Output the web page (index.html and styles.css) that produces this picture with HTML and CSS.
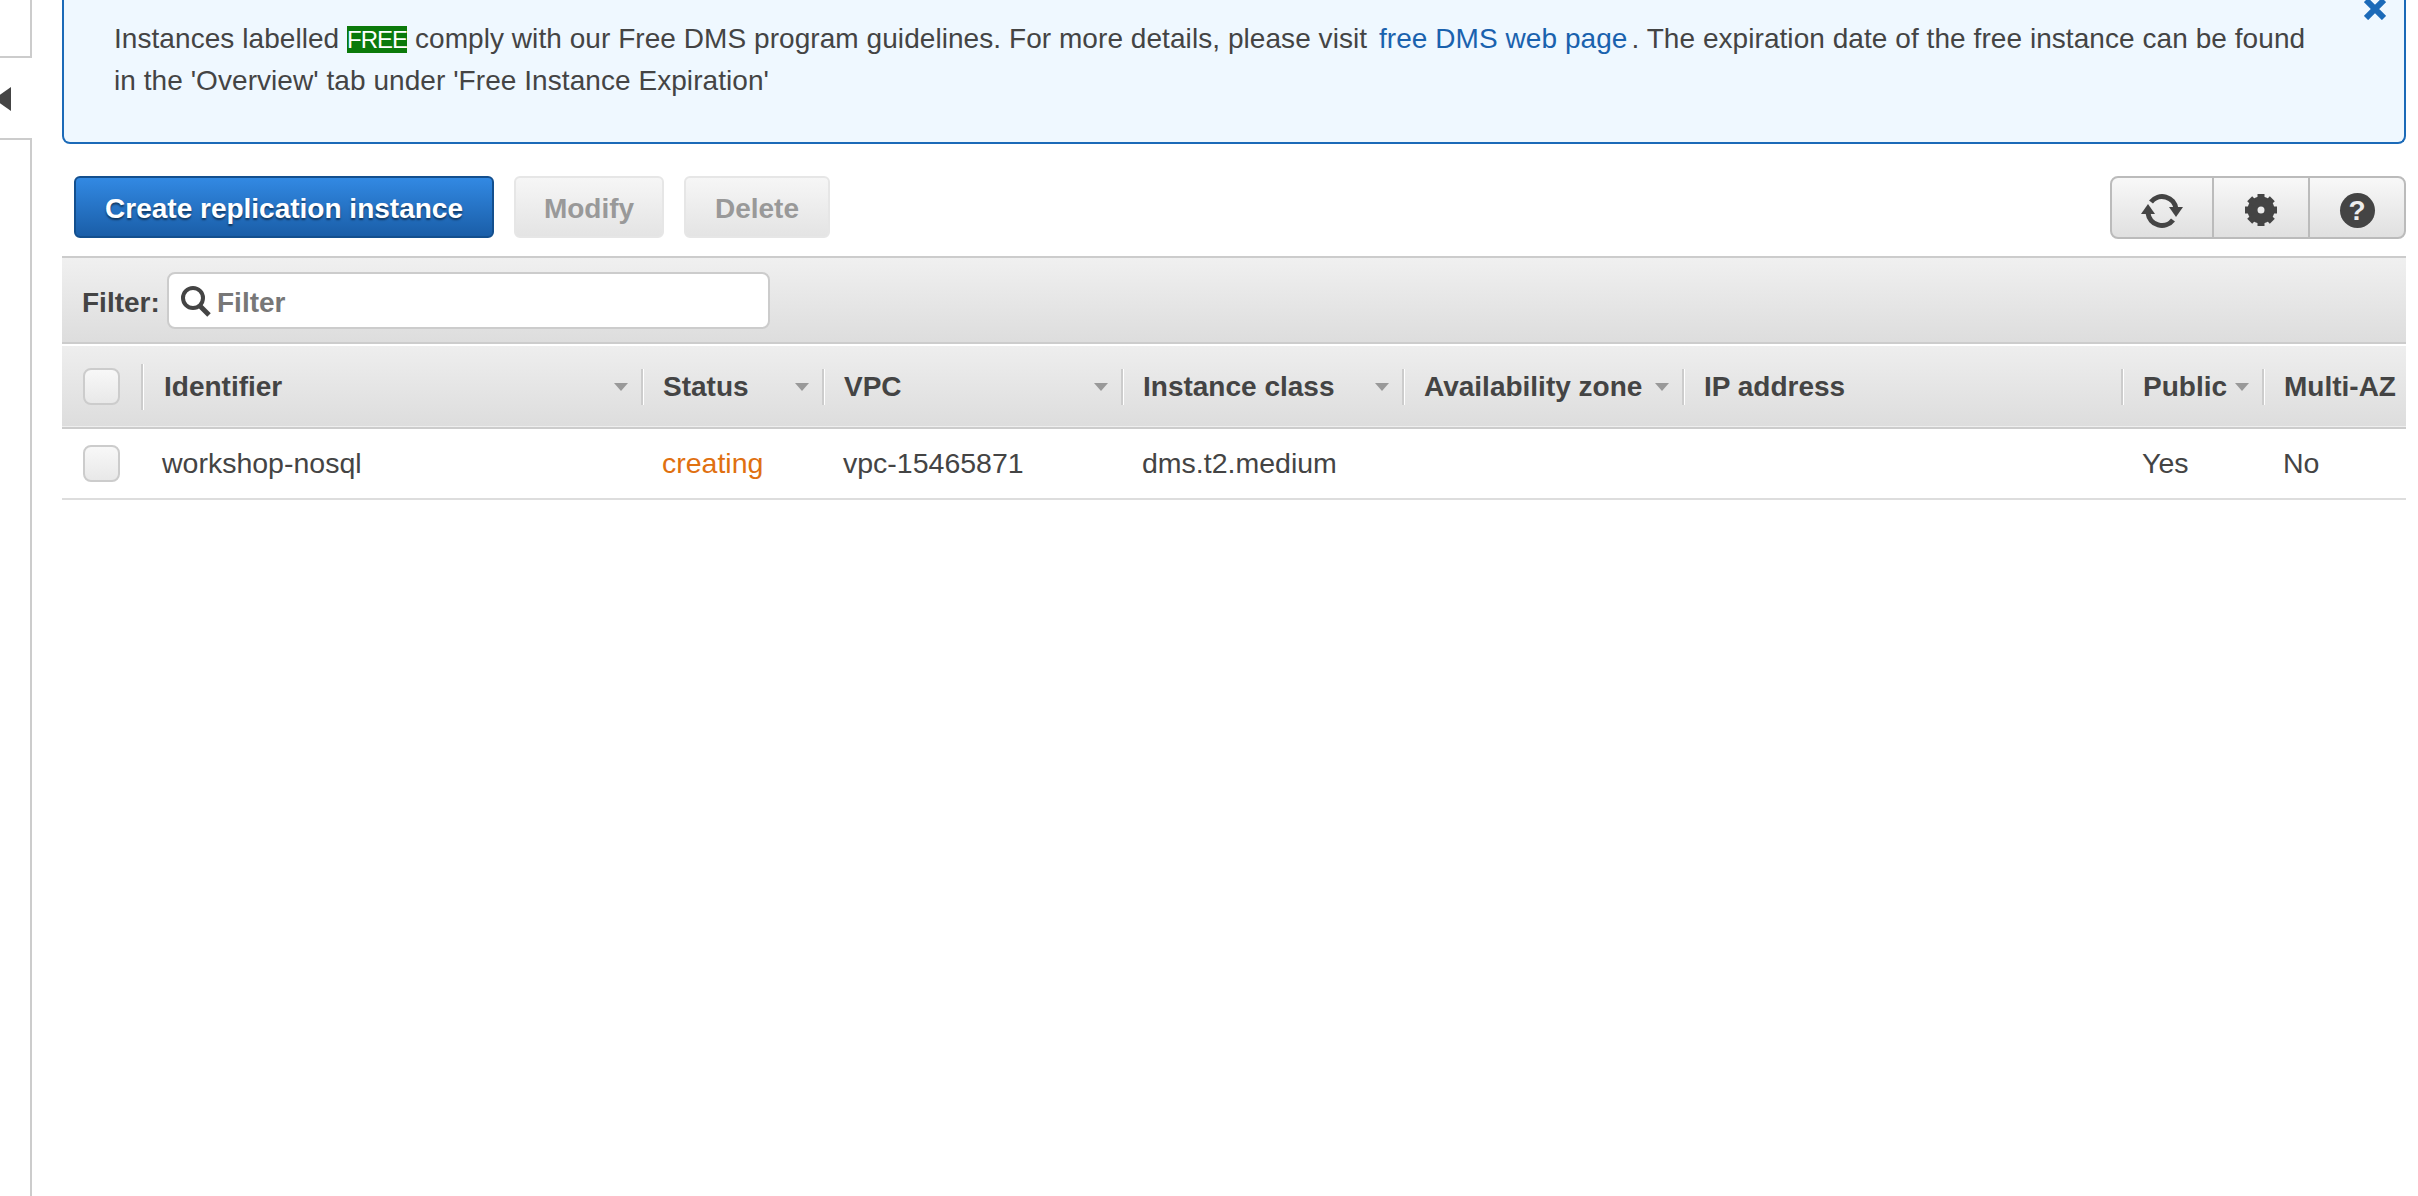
FILE: index.html
```html
<!DOCTYPE html>
<html>
<head>
	<meta charset="utf-8">
	<title>Replication instances</title>
	<link rel="stylesheet" href="styles.css">
</head>

<body>
	<div class="page">
		<div class="side">
			<div class="side-top"></div>
			<div class="side-toggle"><span class="toggle-arrow"></span></div>
			<div class="side-rest"></div>
		</div>

		<div class="main">
			<div class="notice">
				<p>Instances labelled <span class="free">FREE</span> comply with our Free DMS program guidelines. For more details, please visit <a class="link" href="#">free DMS web page</a>. The expiration date of the free instance can be found in the 'Overview' tab under 'Free Instance Expiration'</p>
				<svg class="notice-close" viewBox="0 0 22 22"><path d="M2 2 L20 20 M20 2 L2 20" /></svg>
			</div>

			<div class="toolbar">
				<button class="btn btn-primary">Create replication instance</button>
				<button class="btn btn-off btn-modify">Modify</button>
				<button class="btn btn-off btn-delete">Delete</button>
				<div class="tools">
					<div class="tool tool-refresh">
						<svg width="42" height="38" viewBox="0 0 42 38">
							<path class="ico-line" d="M10 10 A14 14 0 0 1 35 17" />
							<path class="ico-fill" d="M28 15 L42 15 L35 25 Z" />
							<path class="ico-line" d="M32 28 A14 14 0 0 1 7 21" />
							<path class="ico-fill" d="M0 22 L14 22 L7 12 Z" />
						</svg>
					</div>
					<div class="tool tool-gear">
						<svg width="32" height="32" viewBox="-16 -16 32 32">
							<circle class="gear-ring" r="8.500" />
							<g class="ico-fill">
								<rect x="-3.500" y="-16" width="7" height="7" />
								<rect x="-3.500" y="-16" width="7" height="7" transform="rotate(45)" />
								<rect x="-3.500" y="-16" width="7" height="7" transform="rotate(90)" />
								<rect x="-3.500" y="-16" width="7" height="7" transform="rotate(135)" />
								<rect x="-3.500" y="-16" width="7" height="7" transform="rotate(180)" />
								<rect x="-3.500" y="-16" width="7" height="7" transform="rotate(225)" />
								<rect x="-3.500" y="-16" width="7" height="7" transform="rotate(270)" />
								<rect x="-3.500" y="-16" width="7" height="7" transform="rotate(315)" />
							</g>
						</svg>
					</div>
					<div class="tool tool-help">
						<span class="help-mark">?</span>
					</div>
				</div>
			</div>

			<div class="filter-bar">
				<label class="filter-label">Filter:</label>
				<div class="filter-box">
					<svg class="search-ico" width="32" height="34" viewBox="0 0 32 34">
						<circle cx="13" cy="14" r="10" />
						<path d="M20 22 L29 31" />
					</svg>
					<span class="filter-hint">Filter</span>
				</div>
			</div>

			<table class="grid">
				<colgroup>
					<col class="c-check">
					<col class="c-id">
					<col class="c-status">
					<col class="c-vpc">
					<col class="c-class">
					<col class="c-zone">
					<col class="c-ip">
					<col class="c-public">
					<col class="c-multi">
				</colgroup>
				<thead>
					<tr>
						<th class="check-cell"><span class="check"></span></th>
						<th><div class="head head-first"><span>Identifier</span><i class="sort"></i></div></th>
						<th><div class="head"><span>Status</span><i class="sort"></i></div></th>
						<th><div class="head"><span>VPC</span><i class="sort"></i></div></th>
						<th><div class="head"><span>Instance class</span><i class="sort"></i></div></th>
						<th><div class="head"><span>Availability zone</span><i class="sort"></i></div></th>
						<th><div class="head"><span>IP address</span></div></th>
						<th><div class="head"><span>Public</span><i class="sort"></i></div></th>
						<th><div class="head"><span>Multi-AZ</span></div></th>
					</tr>
				</thead>
				<tbody>
					<tr>
						<td class="check-cell"><span class="check"></span></td>
						<td>workshop-nosql</td>
						<td class="creating">creating</td>
						<td>vpc-15465871</td>
						<td>dms.t2.medium</td>
						<td></td>
						<td></td>
						<td>Yes</td>
						<td>No</td>
					</tr>
				</tbody>
			</table>
		</div>
	</div>
</body>
</html>
```

FILE: styles.css
```css
* {
	padding: 0;
	margin: 0;
	box-sizing: border-box;
}
html, body {
	height: 100%;
	overflow: hidden;
	background-color: #fff;
}
body {
	font-family: "Liberation Sans", Arial, sans-serif;
	font-size: 28px;
	color: #444;
}

.page {
	display: flex;
	height: 1196px;
}

/* left panel */
.side {
	display: flex;
	flex-direction: column;
	width: 32px;
	flex: none;
}
.side-top {
	height: 58px;
	border-right: 2px solid #ccc;
	border-bottom: 2px solid #ccc;
}
.side-toggle {
	display: flex;
	align-items: center;
	height: 80px;
}
.toggle-arrow {
	width: 0;
	height: 0;
	margin: 1px 0 0 -6px;
	border-top: 12px solid transparent;
	border-bottom: 12px solid transparent;
	border-right: 17px solid #444;
}
.side-rest {
	flex: 1;
	border-top: 2px solid #ccc;
	border-right: 2px solid #ccc;
}

.main {
	width: 2344px;
	margin-left: 30px;
}

/* blue message */
.notice {
	position: relative;
	height: 144px;
	padding: 18px 75px 0 50px;
	background-color: #eff8ff;
	border: 2px solid #1b6ab8;
	border-top: 0;
	border-radius: 0 0 8px 8px;
	letter-spacing: .06px;
	line-height: 42px;
}
.free {
	display: inline-block;
	height: 27px;
	background-color: #0b7a0b;
	color: #fff;
	font-size: 24px;
	letter-spacing: -1px;
	line-height: 27px;
}
.link {
	margin: 0 4px;
	color: #1a62ae;
	text-decoration: none;
}
.notice-close {
	position: absolute;
	top: -2px;
	right: 18px;
	width: 22px;
	height: 22px;
	fill: none;
	stroke: #1b6ab8;
	stroke-width: 6;
}

/* buttons */
.toolbar {
	display: flex;
	align-items: flex-start;
	padding: 32px 0 17px 12px;
}
.btn {
	height: 62px;
	padding-top: 3px;
	border-radius: 6px;
	font-family: inherit;
	font-size: 28px;
	font-weight: bold;
}
.btn-primary {
	width: 420px;
	background: linear-gradient(#3289e3, #1a5ea8);
	border: 2px solid #134f8e;
	color: #fff;
	text-shadow: 0 2px 2px rgba(0,0,0,.5);
}
.btn-off {
	background: linear-gradient(#f6f6f6, #e4e4e4);
	border: 2px solid #e6e6e6;
	color: #999;
}
.btn-modify {
	width: 150px;
	margin-left: 20px;
}
.btn-delete {
	width: 146px;
	margin-left: 20px;
}
.tools {
	display: flex;
	height: 63px;
	margin-left: auto;
	background: linear-gradient(#f8f8f8, #e0e0e0);
	border: 2px solid #bbb;
	border-radius: 8px;
}
.tool {
	display: flex;
	align-items: center;
	justify-content: center;
	padding-top: 6px;
}
.tool + .tool {
	border-left: 2px solid #bbb;
}
.tool-refresh {
	width: 100px;
}
.tool-gear {
	width: 96px;
	padding-top: 4px;
}
.tool-help {
	width: 96px;
}
.ico-line {
	fill: none;
	stroke: #444;
	stroke-width: 5;
}
.ico-fill {
	fill: #444;
}
.gear-ring {
	fill: none;
	stroke: #444;
	stroke-width: 10;
}
.help-mark {
	width: 35px;
	height: 35px;
	border-radius: 50%;
	background-color: #444;
	color: #eee;
	font-size: 28px;
	font-weight: bold;
	line-height: 35px;
	text-align: center;
}

/* filter */
.filter-bar {
	display: flex;
	align-items: center;
	height: 88px;
	padding: 1px 20px 0;
	background: linear-gradient(#f0f0f0, #ddd);
	border-top: 2px solid #ccc;
	border-bottom: 2px solid #ccc;
}
.filter-label {
	width: 85px;
	padding-top: 5px;
	font-weight: bold;
}
.filter-box {
	display: flex;
	align-items: center;
	width: 603px;
	height: 57px;
	padding-left: 11px;
	background-color: #fff;
	border: 2px solid #ccc;
	border-radius: 8px;
}
.search-ico {
	fill: none;
	stroke: #444;
	stroke-width: 4;
}
.search-ico path {
	stroke-width: 5;
}
.filter-hint {
	margin-left: 5px;
	padding-top: 5px;
	color: #777;
	font-weight: bold;
}

/* table */
.grid {
	width: 100%;
	margin-top: 2px;
	table-layout: fixed;
	border-collapse: collapse;
}
.c-check { width: 79px; }
.c-id { width: 500px; }
.c-status { width: 181px; }
.c-vpc { width: 299px; }
.c-class { width: 281px; }
.c-zone { width: 280px; }
.c-ip { width: 439px; }
.c-public { width: 141px; }
.c-multi { width: 144px; }

.grid thead tr {
	height: 82px;
	background: linear-gradient(#eee, #ddd);
	border-bottom: 2px solid #ccc;
}
.grid th {
	font-weight: bold;
	text-align: left;
	white-space: nowrap;
}
.head {
	display: flex;
	align-items: center;
	justify-content: space-between;
	height: 36px;
	padding: 1px 13px 0 20px;
	border-left: 2px solid #ccc;
	box-shadow: inset 1px 0 0 #fff;
}
.head-first {
	height: 46px;
	padding-left: 21px;
}
.sort {
	width: 0;
	height: 0;
	margin-top: -1px;
	border-left: 7px solid transparent;
	border-right: 7px solid transparent;
	border-top: 8px solid #999;
}
.grid tbody tr {
	height: 71px;
	border-bottom: 2px solid #ddd;
}
.grid td {
	padding: 0 0 0 21px;
	font-size: 28.500px;
	white-space: nowrap;
}
.grid td.check-cell,
.grid th.check-cell {
	padding: 0 0 0 21px;
}
.check {
	display: block;
	width: 37px;
	height: 37px;
	background: linear-gradient(#f8f8f8, #e8e8e8);
	border: 2px solid #ccc;
	border-radius: 8px;
}
.creating {
	color: #e07010;
}
```
